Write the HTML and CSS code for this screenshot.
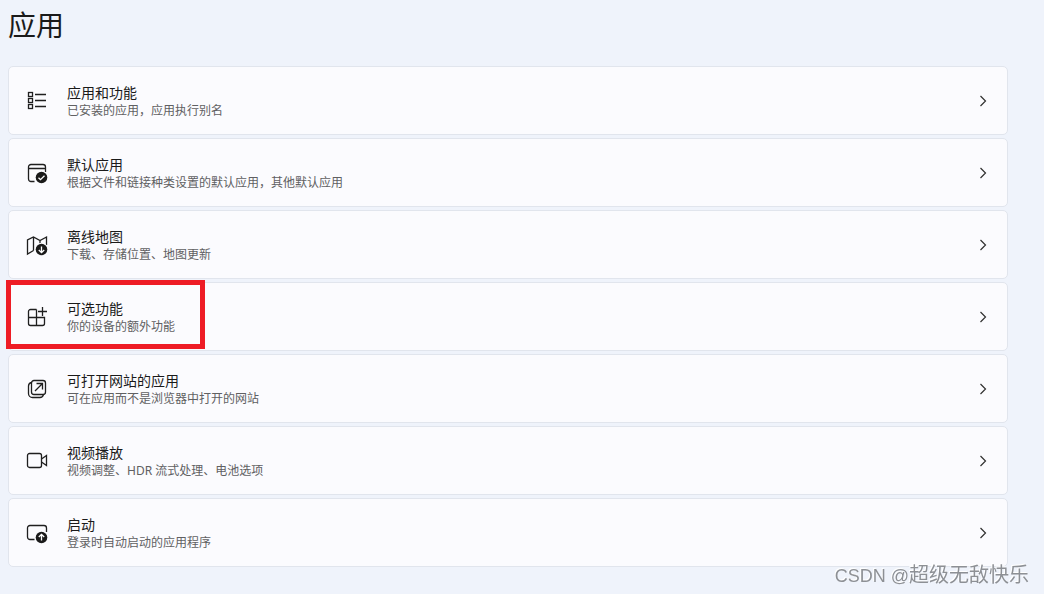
FILE: index.html
```html
<!DOCTYPE html>
<html lang="zh-CN">
<head>
    <meta charset="UTF-8">
    <meta name="viewport" content="width=device-width, initial-scale=1.0">
    <title>应用</title>
    <link rel="stylesheet" href="styles.css">
</head>
<body>
    <main class="page">
        <h1>应用</h1>
        <nav class="lista">
            <a class="card" href="#">
                <svg class="icon" viewBox="0 0 22 22">
                    <rect x="2.5" y="2.5" width="4" height="4"/>
                    <rect x="2.5" y="8.5" width="4" height="4"/>
                    <rect x="2.5" y="14.5" width="4" height="4"/>
                    <path d="M9 4.5h11M9 10.5h11M9 16.5h11"/>
                </svg>
                <span class="text">
                    <span class="title">应用和功能</span>
                    <span class="desc">已安装的应用，应用执行别名</span>
                </span>
                <svg class="arrow" viewBox="0 0 8 12"><path d="M1.5 1l5 5-5 5"/></svg>
            </a>
            <a class="card" href="#">
                <svg class="icon" viewBox="0 -1 22 22">
                    <path d="M8.5 18.5H5A2.5 2.5 0 0 1 2.5 16V4A2.5 2.5 0 0 1 5 1.5h12A2.5 2.5 0 0 1 19.5 4v5M2.5 5.5h17"/>
                    <circle class="fill" cx="15.5" cy="14.5" r="5.8"/>
                    <path class="mark" d="M12.5 14.7l2 2 4-4"/>
                </svg>
                <span class="text">
                    <span class="title">默认应用</span>
                    <span class="desc">根据文件和链接种类设置的默认应用，其他默认应用</span>
                </span>
                <svg class="arrow" viewBox="0 0 8 12"><path d="M1.5 1l5 5-5 5"/></svg>
            </a>
            <a class="card" href="#">
                <svg class="icon" viewBox="0 -1 22 22">
                    <path d="M7.5 15.5l-6 3.500V5l6-3L14 5.500 20.500 2v8M7.500 2v13.500M14 5.500V9"/>
                    <circle class="fill" cx="15.5" cy="14.5" r="5.8"/>
                    <path class="mark" d="M15.5 11.500v6M12.800 15l2.700 2.700 2.700-2.700"/>
                </svg>
                <span class="text">
                    <span class="title">离线地图</span>
                    <span class="desc">下载、存储位置、地图更新</span>
                </span>
                <svg class="arrow" viewBox="0 0 8 12"><path d="M1.5 1l5 5-5 5"/></svg>
            </a>
            <a class="card marked" href="#">
                <svg class="icon" viewBox="0 -1 22 22">
                    <path d="M10.5 2.500h-6a2 2 0 0 0-2 2v12a2 2 0 0 0 2 2h12a2 2 0 0 0 2-2v-6h-16M10.500 2.500v16M16.500 0v9M12 4.500h9"/>
                </svg>
                <span class="text">
                    <span class="title">可选功能</span>
                    <span class="desc">你的设备的额外功能</span>
                </span>
                <svg class="arrow" viewBox="0 0 8 12"><path d="M1.5 1l5 5-5 5"/></svg>
            </a>
            <a class="card" href="#">
                <svg class="icon" viewBox="0 0 22 22">
                    <rect x="5.5" y="2.5" width="14" height="14" rx="2.5"/>
                    <path d="M5.5 4.500C3.500 5 2.500 6 2.500 8v7.500a4 4 0 0 0 4 4H14c2 0 3-1 3.500-3M9 13l7-7M10.500 5.500h6v6"/>
                </svg>
                <span class="text">
                    <span class="title">可打开网站的应用</span>
                    <span class="desc">可在应用而不是浏览器中打开的网站</span>
                </span>
                <svg class="arrow" viewBox="0 0 8 12"><path d="M1.5 1l5 5-5 5"/></svg>
            </a>
            <a class="card" href="#">
                <svg class="icon" viewBox="0 -1 22 22">
                    <rect x="1.5" y="2.5" width="14" height="14" rx="2"/>
                    <path d="M15.5 8l5-3.500v10l-5-3.500"/>
                </svg>
                <span class="text">
                    <span class="title">视频播放</span>
                    <span class="desc">视频调整、HDR 流式处理、电池选项</span>
                </span>
                <svg class="arrow" viewBox="0 0 8 12"><path d="M1.5 1l5 5-5 5"/></svg>
            </a>
            <a class="card" href="#">
                <svg class="icon" viewBox="0 -1 22 22">
                    <path d="M8.5 16.500H4A2.500 2.500 0 0 1 1.500 14V5A2.500 2.500 0 0 1 4 2.500h14A2.500 2.500 0 0 1 20.500 5v4"/>
                    <circle class="fill" cx="15.5" cy="14.5" r="5.8"/>
                    <path class="mark" d="M15.5 17.500v-6M12.800 14l2.700-2.700 2.700 2.700"/>
                </svg>
                <span class="text">
                    <span class="title">启动</span>
                    <span class="desc">登录时自动启动的应用程序</span>
                </span>
                <svg class="arrow" viewBox="0 0 8 12"><path d="M1.5 1l5 5-5 5"/></svg>
            </a>
        </nav>
    </main>
    <div class="watermark"><span class="site">CSDN @</span>超级无敌快乐</div>
</body>
</html>
```
FILE: styles.css
```css
* {
    box-sizing: border-box;
}
body {
    margin: 0;
    font-family: "Noto Sans", "Noto Sans CJK SC", sans-serif;
    color: #1a1a1a;
    background-color: #eff3fb;
}
.page {
    padding: 4px 36px 24px 8px;
}
h1 {
    margin: 0 0 20px;
    font-size: 28px;
    line-height: 42px;
    font-weight: 400;
}
.lista {
    display: flex;
    flex-direction: column;
    gap: 3px;
}
.card {
    position: relative;
    display: flex;
    align-items: center;
    padding: 15px 20px 15px 17px;
    color: inherit;
    text-decoration: none;
    background-color: #fbfbfe;
    border: 1px solid #e1e5ed;
    border-radius: 5px;
}
.card:hover {
    background-color: #f6f8fc;
}
.icon {
    width: 22px;
    height: 22px;
    margin-right: 19px;
    fill: none;
    stroke: #1f1f1f;
    stroke-width: 1.3;
    overflow: visible;
}
.icon .fill {
    fill: #1a1a1a;
    stroke: #fbfbfe;
    stroke-width: 2;
    paint-order: stroke;
}
.icon .mark {
    stroke: #fff;
}
.text {
    flex: 1;
}
.title, .desc {
    display: block;
}
.title {
    font-size: 14px;
    line-height: 21px;
}
.desc {
    font-size: 12px;
    line-height: 16px;
    color: #606062;
}
.arrow {
    width: 8px;
    height: 12px;
    fill: none;
    stroke: #303030;
    stroke-width: 1.2;
}
/* red frame round the left part of the card */
.marked {
    z-index: 1;
}
.marked::after {
    content: "";
    position: absolute;
    top: -3px;
    left: -3px;
    box-sizing: border-box;
    width: 199px;
    height: 69px;
    border: 5px solid #ee1c25;
}
.watermark {
    position: fixed;
    right: 15px;
    bottom: 3px;
    font-family: "Liberation Sans", "Noto Sans CJK SC", sans-serif;
    font-size: 20px;
    line-height: 30px;
    color: #8d9095;
    text-shadow: -1px -1px 0 #fff;
}
.site {
    font-size: 18px;
}
```
